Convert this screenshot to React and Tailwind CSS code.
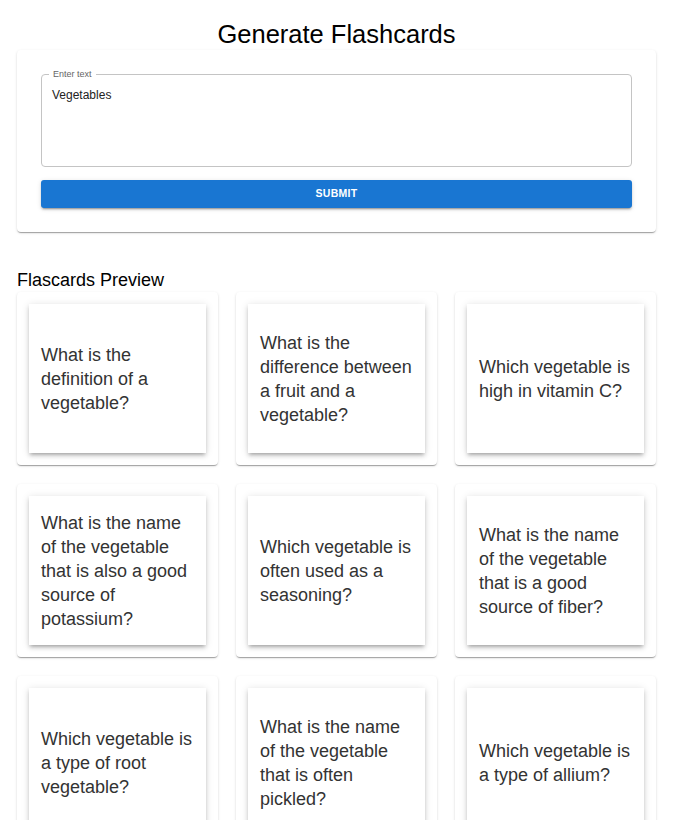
import React from 'react';

const cards = [
  'What is the definition of a vegetable?',
  'What is the difference between a fruit and a vegetable?',
  'Which vegetable is high in vitamin C?',
  'What is the name of the vegetable that is also a good source of potassium?',
  'Which vegetable is often used as a seasoning?',
  'What is the name of the vegetable that is a good source of fiber?',
  'Which vegetable is a type of root vegetable?',
  'What is the name of the vegetable that is often pickled?',
  'Which vegetable is a type of allium?',
];

export default function App() {
  return (
    <div className="min-h-screen bg-white font-['Liberation_Sans',Arial,sans-serif] text-black">
      <div className="ml-[17px] w-[639px] pb-10">
        <h1 className="pt-[19px] text-center text-[25.5px] leading-[31px]">Generate Flashcards</h1>

        {/* Input panel */}
        <div className="rounded-[4px] bg-white p-6 shadow-[0px_2px_1px_-1px_rgba(0,0,0,0.2),0px_1px_1px_0px_rgba(0,0,0,0.14),0px_1px_3px_0px_rgba(0,0,0,0.12)]">
          <div className="relative h-[93px] rounded-[4px] border border-[#c4c4c4] px-[10px] pt-[12px]">
            <span className="absolute -top-[7px] left-[7px] bg-white px-[4px] text-[9px] leading-[12px] text-[#666]">
              Enter text
            </span>
            <div className="text-[12px] leading-[17px] text-[#222]">Vegetables</div>
          </div>
          <button className="mt-[13px] h-[28px] w-full rounded-[3px] bg-[#1976d2] text-[10.5px] font-bold uppercase tracking-[0.3px] text-white shadow-[0px_3px_1px_-2px_rgba(0,0,0,0.2),0px_2px_2px_0px_rgba(0,0,0,0.14),0px_1px_5px_0px_rgba(0,0,0,0.12)]">
            Submit
          </button>
        </div>

        <h2 className="mt-[36px] text-[18px] leading-[24px]">Flascards Preview</h2>

        {/* Cards grid */}
        <div className="grid grid-cols-3 gap-x-[18px] gap-y-[19px]">
          {cards.map((q) => (
            <div
              key={q}
              className="h-[173px] rounded-[4px] bg-white p-[12px] shadow-[0px_2px_1px_-1px_rgba(0,0,0,0.2),0px_1px_1px_0px_rgba(0,0,0,0.14),0px_1px_3px_0px_rgba(0,0,0,0.12)]"
            >
              <div className="flex h-full items-center bg-white px-[12px] shadow-[0px_3px_3px_-2px_rgba(0,0,0,0.2),0px_3px_4px_0px_rgba(0,0,0,0.14),0px_1px_8px_0px_rgba(0,0,0,0.12)]">
                <p className="text-[18px] leading-[24px] text-[#333]">{q}</p>
              </div>
            </div>
          ))}
        </div>
      </div>
    </div>
  );
}
